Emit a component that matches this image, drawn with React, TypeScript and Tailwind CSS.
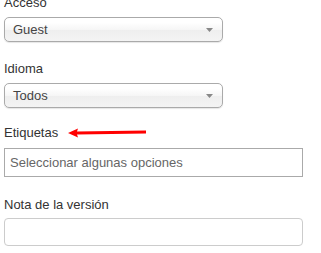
import React from "react";

const font = { fontFamily: '"Liberation Sans", Arial, sans-serif' };

function ChosenSelect({ value }: { value: string }) {
  return (
    <div className="relative flex h-[25px] w-[219px] items-center rounded-[5px] border border-[#aaa] bg-[linear-gradient(#fff_20%,#f6f6f6_50%,#eee_52%,#f4f4f4_100%)] pl-[8px] text-[13px] text-[#444] shadow-[0_1px_1px_rgba(0,0,0,0.1)]">
      <span>{value}</span>
      <svg
        className="absolute right-[9px] top-[10px]"
        width="7"
        height="4"
        viewBox="0 0 7 4"
      >
        <path d="M0 0 L7 0 L3.5 4 Z" fill="#888" />
      </svg>
    </div>
  );
}

function Label({ children }: { children: React.ReactNode }) {
  return <div className="text-[13px] leading-[18px] text-[#333]">{children}</div>;
}

export default function App() {
  return (
    <div className="h-[253px] w-[321px] overflow-hidden bg-white" style={font}>
      <div className="-mt-[6px] flex flex-col pl-[4px]">
        <Label>Acceso</Label>
        <div className="mt-[5px]">
          <ChosenSelect value="Guest" />
        </div>

        <div className="mt-[18px]">
          <Label>Idioma</Label>
        </div>
        <div className="mt-[5px]">
          <ChosenSelect value="Todos" />
        </div>

        <div className="mt-[16px] flex items-center">
          <Label>Etiquetas</Label>
          <svg className="ml-[8px]" width="82" height="12" viewBox="0 0 82 12">
            <path d="M2 6 L12 1.5 L11 4.6 L80 3.6 L80 6.6 L11 7.6 L12 10.5 Z" fill="#f00" />
          </svg>
        </div>
        <div className="mt-[6px] flex h-[29px] w-[299px] items-center border border-[#aaa] bg-white pl-[5px] text-[13px] text-[#666]">
          Seleccionar algunas opciones
        </div>

        <div className="mt-[19px]">
          <Label>Nota de la versión</Label>
        </div>
        <div className="mt-[4px] h-[28px] w-[299px] rounded-[4px] border border-[#ccc] bg-white" />
      </div>
    </div>
  );
}
